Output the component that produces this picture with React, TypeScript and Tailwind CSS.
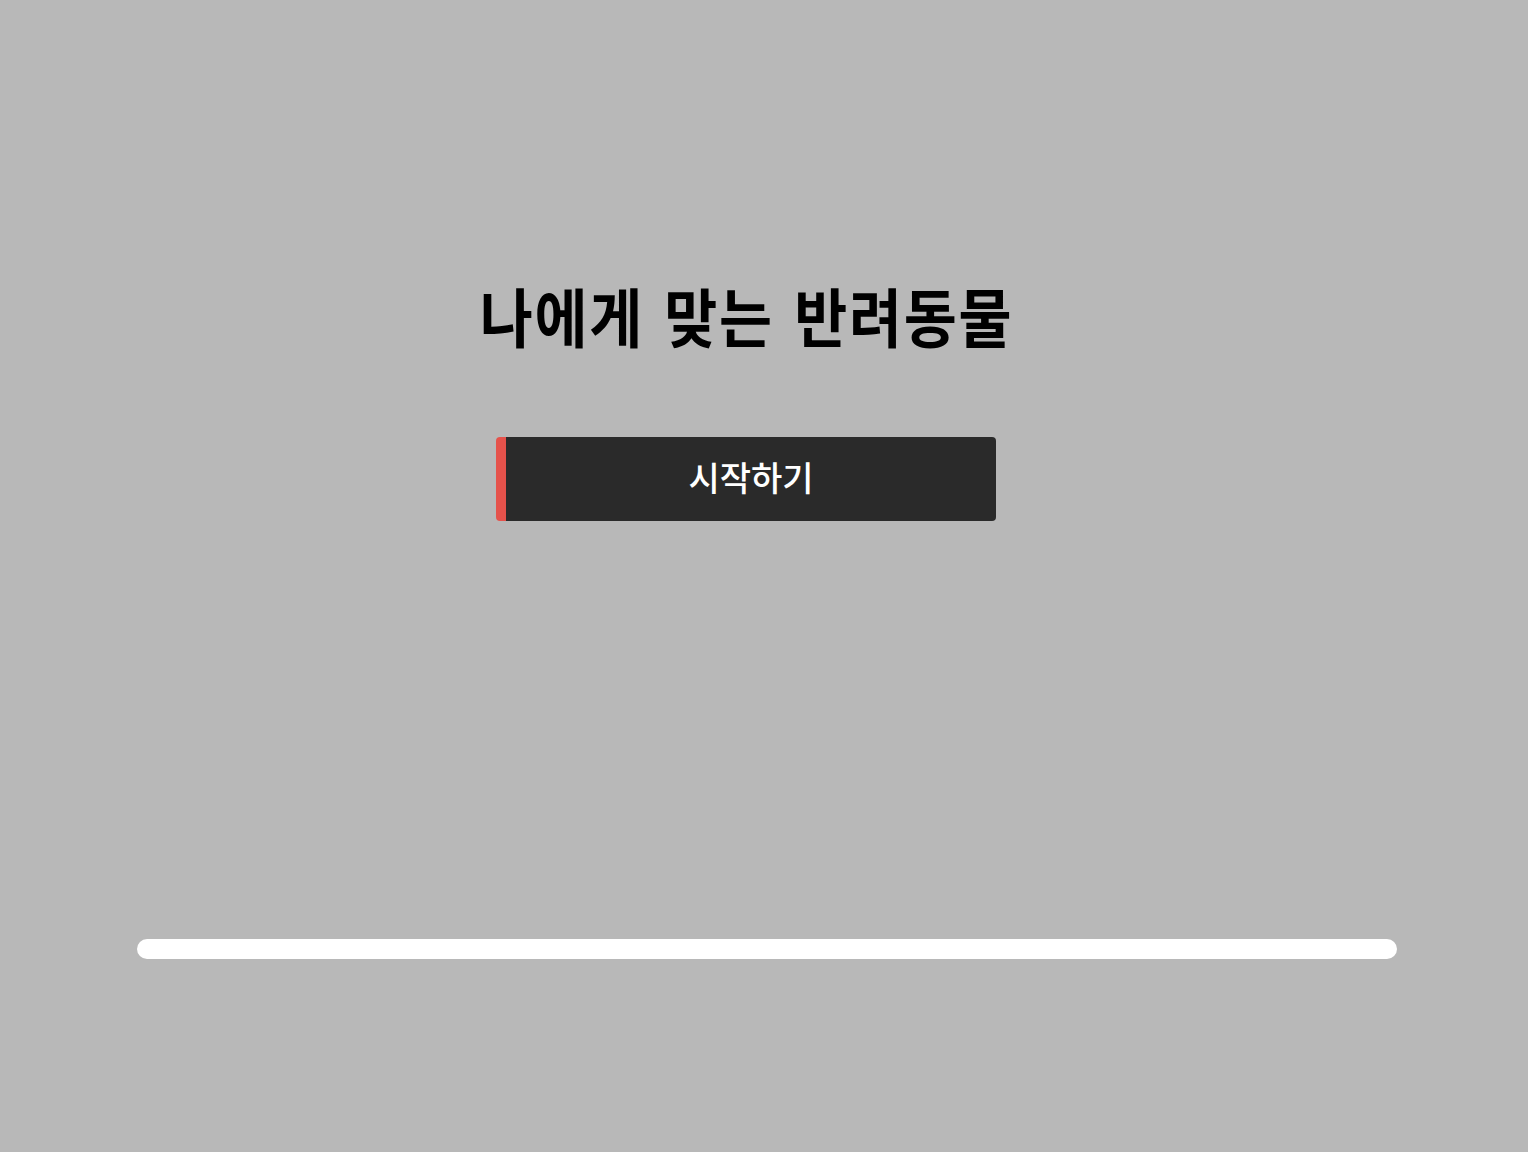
export default function App() {
  return (
    <div
      className="min-h-[1152px] w-full bg-[#b8b8b8] flex flex-col"
      style={{ fontFamily: '"Noto Sans CJK KR", "Noto Sans", sans-serif' }}
    >
      <div className="flex flex-col items-center pr-[36px] pt-[270px]">
        <h1 className="text-[64px] leading-[88px] font-bold tracking-[2px] [word-spacing:6px] text-black scale-x-[0.9]">
          나에게 맞는 반려동물
        </h1>
        <button className="mt-[79px] w-[500px] h-[84px] rounded-[4px] bg-[#2a2a2a] border-l-[10px] border-[#e5524b] text-white text-[34px] font-medium flex items-center justify-center pb-[6px]">
          시작하기
        </button>
      </div>
      <div className="mt-[418px] pl-[137px]">
        <div className="w-[1260px] h-[20px] rounded-full bg-white" />
      </div>
    </div>
  )
}
